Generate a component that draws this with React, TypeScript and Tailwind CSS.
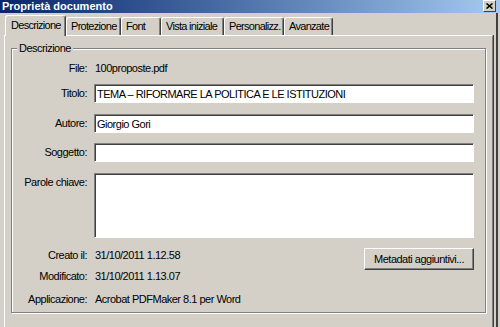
import React from "react";

type TabProps = { label: string; w: string; active?: boolean };

function Tab({ label, w, active }: TabProps) {
  if (active) {
    return (
      <div className={`${w} h-[21px] -mb-px relative z-10 bg-[#d4d0c8] border-t border-l border-r border-white border-r-[#404040] rounded-t-[3px] shadow-[inset_-1px_0_0_#808080] flex items-center whitespace-nowrap tracking-[-0.7px] pl-[5px] pb-[1px]`}>
        {label}
      </div>
    );
  }
  return (
    <div className={`${w} h-[18px] border-t border-l border-r border-white border-r-[#404040] rounded-t-[3px] shadow-[inset_-1px_0_0_#808080] flex items-center whitespace-nowrap tracking-[-0.7px] pl-[4px]`}>
      {label}
    </div>
  );
}

function Field({ label, value, h = "h-[19px]" }: { label: string; value?: string; h?: string }) {
  return (
    <div className="flex items-start">
      <span className="w-[75px] shrink-0 text-right leading-[14px] pt-[2px]">{label}</span>
      <div className={`ml-[7px] flex-1 ${h} bg-white border border-t-[#808080] border-l-[#808080] border-b-white border-r-white shadow-[inset_1px_1px_0_#404040] pl-[2px] pt-[2px] leading-[14px]`}>
        {value}
      </div>
    </div>
  );
}

function InfoRow({ label, value }: { label: string; value: string }) {
  return (
    <div className="flex items-center h-[14px] leading-[14px]">
      <span className="w-[75px] shrink-0 text-right">{label}</span>
      <span className="ml-[8px]">{value}</span>
    </div>
  );
}

export default function App() {
  return (
    <div className="w-[500px] h-[327px] overflow-hidden flex flex-col bg-[#d4d0c8] text-black text-[11px] tracking-[-0.5px] font-['Liberation_Sans',Arial,sans-serif]">
      {/* title bar */}
      <div className="h-[13px] shrink-0 flex items-start justify-between bg-linear-to-r from-[#0a246a] to-[#a6caf0] pl-[2px] pr-[4px]">
        <span className="text-white font-bold tracking-normal leading-[12px]">Proprietà documento</span>
        <div className="w-[13px] h-[12px] bg-[#d4d0c8] border-t border-l border-white border-b border-r border-b-[#404040] border-r-[#404040] flex items-center justify-center">
          <svg width="7" height="6" viewBox="0 0 7 6">
            <path d="M0.5 0.5 L6.5 5.5 M6.5 0.5 L0.5 5.5" stroke="#000" strokeWidth="1.6" />
          </svg>
        </div>
      </div>

      <div className="flex-1 flex">
        <div className="w-[496px] shrink-0 flex flex-col">
          {/* tabs */}
          <div className="h-[22px] shrink-0 flex items-end pl-[5px]">
            <Tab label="Descrizione" w="w-[61px]" active />
            <Tab label="Protezione" w="w-[55px]" />
            <Tab label="Font" w="w-[40px]" />
            <Tab label="Vista iniziale" w="w-[63px]" />
            <Tab label="Personalizz." w="w-[60px]" />
            <Tab label="Avanzate" w="w-[49px]" />
          </div>

          {/* tab panel */}
          <div className="flex-1 ml-[4px] w-[489px] border-t border-l border-r border-white border-r-[#808080] shadow-[1px_0_0_#404040] pt-[6px] pl-[6px] pr-[6px]">
            <fieldset className="border border-[#808080] shadow-[inset_1px_1px_0_#fff,1px_1px_0_#fff] pb-[6px]">
              <legend className="ml-[5px] px-[2px] leading-[13px] bg-[#d4d0c8]">Descrizione</legend>
              <div className="flex flex-col pr-[11px]">
                <div className="mt-[6px]">
                  <InfoRow label="File:" value="100proposte.pdf" />
                </div>
                <div className="mt-[9px]">
                  <Field label="Titolo:" value="TEMA – RIFORMARE LA POLITICA E LE ISTITUZIONI" />
                </div>
                <div className="mt-[11px]">
                  <Field label="Autore:" value="Giorgio Gori" />
                </div>
                <div className="mt-[10px]">
                  <Field label="Soggetto:" />
                </div>
                <div className="mt-[11px]">
                  <Field label="Parole chiave:" h="h-[65px]" />
                </div>
                <div className="mt-[10px] flex items-start">
                  <div className="flex-1">
                    <InfoRow label="Creato il:" value="31/10/2011 1.12.58" />
                  </div>
                  <button className="w-[110px] h-[22px] bg-[#d4d0c8] border-t border-l border-b border-r border-white border-b-[#404040] border-r-[#404040] shadow-[inset_-1px_-1px_0_#808080] leading-[14px]">
                    Metadati aggiuntivi...
                  </button>
                </div>
                <div className="-mt-px">
                  <InfoRow label="Modificato:" value="31/10/2011 1.13.07" />
                </div>
                <div className="mt-[9px]">
                  <InfoRow label="Applicazione:" value="Acrobat PDFMaker 8.1 per Word" />
                </div>
              </div>
            </fieldset>
          </div>
        </div>
        <div className="w-[2px] shrink-0 bg-[#404040]" />
      </div>
    </div>
  );
}
